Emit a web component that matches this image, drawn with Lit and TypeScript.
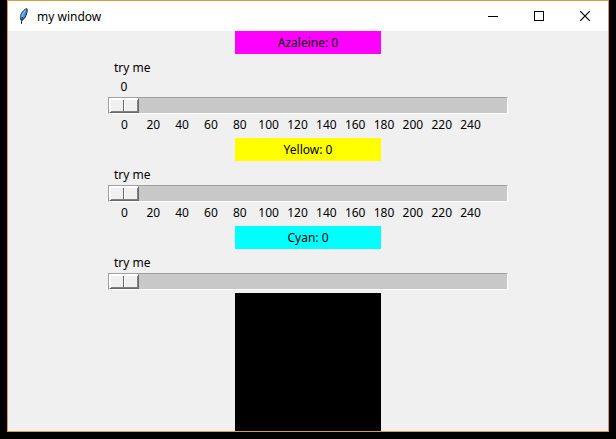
import { LitElement, html, css, nothing } from "lit";
import { customElement, property, state } from "lit/decorators.js";
import { styleMap } from "lit/directives/style-map.js";

const MAX = 255;
const TICKS = Array.from({ length: 13 }, (_, i) => i * 20);

/** Horizontal scale with a caption, an optional readout above and ticks below. */
@customElement("tk-scale")
class TkScale extends LitElement {
  @property() name = "";
  @property({ type: Number }) value = 0;
  @property({ type: Boolean }) readout = false;
  @property({ type: Boolean }) ticks = false;

  static styles = css`
    :host {
      display: block;
      box-sizing: border-box;
      width: 400px;
      max-width: 100%;
      padding: 4px 0 3px;
    }
    .caption {
      display: block;
      padding-left: 6px;
      line-height: 19px;
    }
    .lane {
      padding-right: 32px;
    }
    .value {
      display: block;
      width: 32px;
      line-height: 19px;
      text-align: center;
    }
    .slider {
      appearance: none;
      display: block;
      box-sizing: border-box;
      width: 100%;
      height: 17px;
      margin: 1px 0 0;
      border: 1px solid;
      border-color: #a0a0a0 #fff #fff #a0a0a0;
      background: #c8c8c8;
    }
    .slider::-webkit-slider-thumb {
      appearance: none;
      box-sizing: border-box;
      width: 30px;
      height: 15px;
      border: 1px solid;
      border-color: #fff #696969 #696969 #fff;
      border-radius: 0;
      background: linear-gradient(
        90deg,
        #f0f0f0 13px,
        #696969 13px 14px,
        #fff 14px 15px,
        #f0f0f0 15px
      );
      box-shadow: inset 1px 1px #fff, inset -1px -1px #808080;
    }
    .ticks {
      display: flex;
      padding: 0 23px 0 2px;
      line-height: 21px;
    }
    .tick {
      flex: 1 1 0;
      min-width: 0;
      text-align: center;
    }
  `;

  private onInput(e: Event) {
    this.value = Number((e.target as HTMLInputElement).value);
    this.dispatchEvent(new CustomEvent("change-value", { detail: this.value }));
  }

  render() {
    const offset = { marginLeft: `${(this.value / MAX) * 100}%` };
    return html`
      <label class="caption" for="slider">try me</label>
      ${this.readout
        ? html`<div class="lane">
            <output class="value" for="slider" style=${styleMap(offset)}>${this.value}</output>
          </div>`
        : nothing}
      <input
        id="slider"
        class="slider"
        type="range"
        min="0"
        max=${MAX}
        title=${this.name}
        .value=${String(this.value)}
        @input=${this.onInput}
      />
      ${this.ticks
        ? html`<div class="ticks">
            ${TICKS.map((t) => html`<span class="tick">${t}</span>`)}
          </div>`
        : nothing}
    `;
  }
}

interface Channel {
  name: string;
  color: string;
  readout: boolean;
  ticks: boolean;
}

const CHANNELS: Channel[] = [
  { name: "Azaleine", color: "#ff00ff", readout: true, ticks: true },
  { name: "Yellow", color: "#ffff00", readout: false, ticks: true },
  { name: "Cyan", color: "#00ffff", readout: false, ticks: false },
];

@customElement("app-root")
class AppRoot extends LitElement {
  @state() private values = [0, 0, 0];

  static styles = css`
    :host {
      display: flex;
      box-sizing: border-box;
      min-height: 100vh;
      padding: 0 7px 7px;
      background: #000;
      color: #000;
      font: 12px/19px "Noto Sans", "Open Sans", sans-serif;
    }
    .window {
      flex: 1;
      min-width: 0;
      display: flex;
      flex-direction: column;
      border: 1px solid #dc9a46;
      background: #f0f0f0;
    }
    .titlebar {
      display: flex;
      align-items: center;
      height: 30px;
      background: #fff;
    }
    .feather {
      width: 16px;
      height: 16px;
      margin-left: 8px;
    }
    .title {
      flex: 1;
      margin: 0 0 0 5px;
      font-size: 12px;
      font-weight: 400;
    }
    .control {
      display: flex;
      align-items: center;
      justify-content: center;
      width: 46px;
      height: 28px;
      padding: 0;
      border: 0;
      background: none;
    }
    .client {
      flex: 1;
      display: flex;
      flex-direction: column;
      align-items: center;
    }
    .swatch {
      width: 146px;
      line-height: 23px;
      text-align: center;
    }
    .mix {
      flex: 1;
      width: 146px;
      min-height: 130px;
    }
  `;

  private setValue(index: number, value: number) {
    this.values = this.values.map((v, i) => (i === index ? value : v));
  }

  render() {
    const [r, g, b] = this.values;
    return html`
      <main class="window">
        <header class="titlebar">
          <svg class="feather" viewBox="0 0 16 16" aria-hidden="true">
            <path
              d="M11 0C8.500 .8 5.500 3.500 4.500 6.500C3.800 8.800 3.800 10.500 4.500 12.200L6.500 12.500C8.800 10.500 10 8.500 10.500 6C11.500 4 11.800 2 11 0Z"
              fill="#4b8fe0"
            />
            <path
              d="M10.800 .6C11.500 2.500 11.200 4.200 10.400 6C9.800 8.500 8.500 10.700 6.300 12.300"
              fill="none"
              stroke="#15202c"
            />
            <path
              d="M10.800 .6C8.500 1.300 5.800 4 4.800 6.800C4.200 8.800 4.200 10.500 4.800 12"
              fill="none"
              stroke="#33485e"
              stroke-width=".8"
            />
            <path d="M9.300 2.500C7.500 4.500 6.400 6.500 5.900 9" fill="none" stroke="#a6cdf7" />
            <path d="M6.500 9C5.800 11 5.500 13 5.500 15.800" fill="none" stroke="#101010" />
          </svg>
          <h1 class="title">my window</h1>
          <button class="control" aria-label="Minimize">
            <svg width="10" height="10" viewBox="0 0 10 10" shape-rendering="crispEdges">
              <path d="M0 5h10v1H0z" />
            </svg>
          </button>
          <button class="control" aria-label="Maximize">
            <svg width="10" height="10" viewBox="0 0 10 10" shape-rendering="crispEdges">
              <path d="M.5 .5h9v9h-9z" fill="none" stroke="#000" />
            </svg>
          </button>
          <button class="control" aria-label="Close">
            <svg width="10" height="10" viewBox="0 0 10 10">
              <path d="M0 0L10 10M10 0L0 10" fill="none" stroke="#000" stroke-width="1.200" />
            </svg>
          </button>
        </header>
        <section class="client">
          ${CHANNELS.map(
            (c, i) => html`
              <div class="swatch" style=${styleMap({ background: c.color })}>
                ${c.name}: ${this.values[i]}
              </div>
              <tk-scale
                .name=${c.name}
                .value=${this.values[i]}
                .readout=${c.readout}
                .ticks=${c.ticks}
                @change-value=${(e: CustomEvent<number>) => this.setValue(i, e.detail)}
              ></tk-scale>
            `
          )}
          <div class="mix" style=${styleMap({ background: `rgb(${r}, ${g}, ${b})` })}></div>
        </section>
      </main>
    `;
  }
}
